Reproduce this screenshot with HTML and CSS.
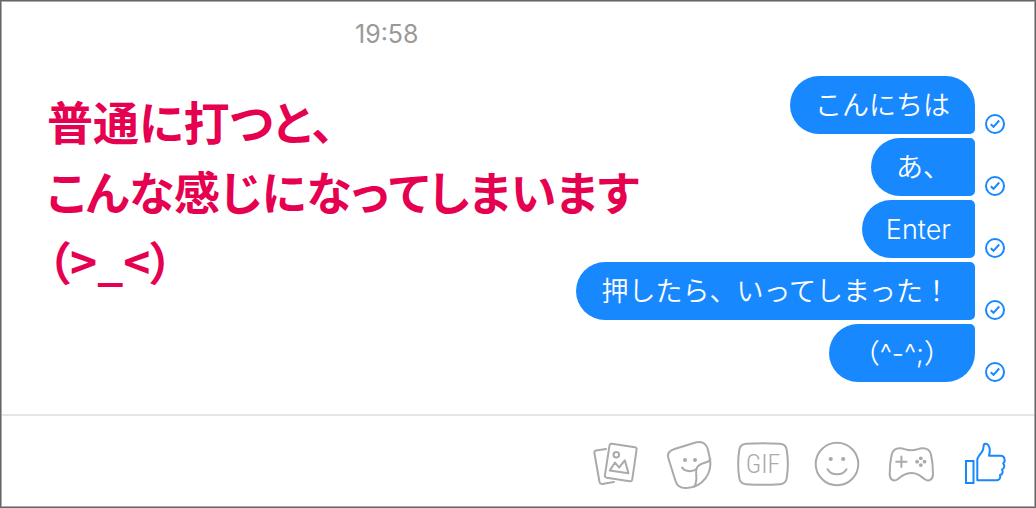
FILE: index.html
```html
<!DOCTYPE html>
<html lang="ja">
<head>
    <meta charset="UTF-8">
    <meta name="viewport" content="width=device-width, initial-scale=1.0">
    <title>Messenger</title>
    <link rel="stylesheet" href="styles.css">
</head>
<body>
    <div class="window">
        <main class="chat">
            <time class="time" datetime="19:58">19:58</time>
            <div class="content">
                <p class="note">普通に打つと、<br>こんな感じになってしまいます<br>（&gt;_&lt;）</p>
                <ul class="messages">
                    <li class="message">
                        <span class="bubble bubble-first">こんにちは</span>
                        <svg class="check" viewBox="0 0 20 20"><circle cx="10" cy="10" r="9"/><path d="M5.800 10.300L8.500 12.800L14.200 6.500"/></svg>
                    </li>
                    <li class="message">
                        <span class="bubble">あ、</span>
                        <svg class="check" viewBox="0 0 20 20"><circle cx="10" cy="10" r="9"/><path d="M5.800 10.300L8.500 12.800L14.200 6.500"/></svg>
                    </li>
                    <li class="message">
                        <span class="bubble bubble-latin">Enter</span>
                        <svg class="check" viewBox="0 0 20 20"><circle cx="10" cy="10" r="9"/><path d="M5.800 10.300L8.500 12.800L14.200 6.500"/></svg>
                    </li>
                    <li class="message">
                        <span class="bubble">押したら、いってしまった！</span>
                        <svg class="check" viewBox="0 0 20 20"><circle cx="10" cy="10" r="9"/><path d="M5.800 10.300L8.500 12.800L14.200 6.500"/></svg>
                    </li>
                    <li class="message">
                        <span class="bubble bubble-latin bubble-last">（^-^;）</span>
                        <svg class="check" viewBox="0 0 20 20"><circle cx="10" cy="10" r="9"/><path d="M5.800 10.300L8.500 12.800L14.200 6.500"/></svg>
                    </li>
                </ul>
            </div>
        </main>
        <footer class="toolbar">
            <button class="tool" type="button" aria-label="写真">
                <svg class="icon" viewBox="0 0 52 52">
                    <path d="M17 11L7 12.600Q5 13 5.400 15L10.500 44Q11 46.200 13 46L25 44"/>
                    <path d="M23 5.700L46 9.300Q48 9.700 47.600 11.700L43.200 41.600Q42.800 43.600 40.800 43.300L17.800 39.700Q15.500 39.300 15.900 37.300L20.500 7.400Q21 5.300 23 5.700Z"/>
                    <circle cx="27.300" cy="16.800" r="2.800"/>
                    <path d="M20.700 32.600L26 24.500L30 29.500L35.800 22.300L39.500 35.300Z"/>
                </svg>
            </button>
            <button class="tool" type="button" aria-label="スタンプ">
                <svg class="icon" viewBox="0 0 52 52">
                    <path d="M11.500 11L31 5C39 2.500 43.500 5.500 45 12L47 21C49.500 35 40 49 24 50C17.500 50.500 14 48 12.500 43L5.300 20C4 15.500 6.500 12.500 11.500 11Z"/>
                    <path d="M47.300 21.500C45 26 38 23.500 34 29.500C31 35 36 39 31.500 48.500"/>
                    <path d="M19 29.500C21.500 33.500 28.500 34.500 33.500 31"/>
                    <circle class="dot" cx="22" cy="22" r="2"/>
                    <circle class="dot" cx="32" cy="22" r="2"/>
                </svg>
            </button>
            <button class="tool" type="button" aria-label="GIF">
                <svg class="icon" viewBox="0 0 52 52">
                    <path d="M9 5.800Q26 4.600 43 5.800Q49 6.300 49.700 12Q52 26 49.700 40Q49 45.700 43 46.200Q26 47.400 9 46.200Q3 45.700 2.300 40Q0 26 2.300 12Q3 6.300 9 5.800Z"/>
                    <text class="gif" x="26" y="35">GIF</text>
                </svg>
            </button>
            <button class="tool" type="button" aria-label="絵文字">
                <svg class="icon" viewBox="0 0 52 52">
                    <circle cx="26" cy="26" r="21.300"/>
                    <path d="M16.500 31.300C20.500 38 31.500 38 35.500 31.300"/>
                    <circle class="dot" cx="19.700" cy="21" r="2.100"/>
                    <circle class="dot" cx="32.200" cy="21" r="2.100"/>
                </svg>
            </button>
            <button class="tool" type="button" aria-label="ゲーム">
                <svg class="icon" viewBox="0 0 52 52">
                    <path d="M15.500 10.300C19 10.500 21 12.300 26.300 12.300S33.500 10.500 37 10.300C42.500 10 45 12.500 46 16.500C47.300 22 48 29 48 36C48 42 43.500 44 39.500 41C35 37.500 32 35 26.300 35S17.500 37.500 13 41C9 44 4.700 42 4.700 36C4.700 29 5.400 22 6.700 16.500C7.700 12.500 10 10 15.500 10.300Z"/>
                    <path d="M16.400 18.500V29M11.200 23.700H21.600"/>
                    <circle class="dot" cx="35.800" cy="20.300" r="1.900"/>
                    <circle class="dot" cx="35.800" cy="27.100" r="1.900"/>
                    <circle class="dot" cx="32.100" cy="23.700" r="1.900"/>
                    <circle class="dot" cx="39.500" cy="23.700" r="1.900"/>
                </svg>
            </button>
            <button class="tool tool-like" type="button" aria-label="いいね！">
                <svg class="icon" viewBox="0 0 52 52">
                    <path class="sharp" d="M7 23H14.500V45H7Z"/>
                    <path d="M18.300 21.500V42.200H37.500C40.500 42.200 42 40 41 37C43.500 36.500 44.500 33.500 43 31.500C45.500 30.500 46 27.500 44.200 25.500C47 23 45.500 17.800 42 17.800H30C31 14 31.200 10 29.500 7.500C28 5 24.700 5 24.700 7.500C24.700 10.500 24.300 12.500 22.500 14.500C20.500 17 18.800 19 18.300 21.500Z"/>
                </svg>
            </button>
        </footer>
    </div>
</body>
</html>
```
FILE: styles.css
```css
* {
    box-sizing: border-box;
}

body {
    margin: 0;
    background-color: #fff;
    font-family: Inter, "Noto Sans CJK JP", sans-serif;
}

.window {
    display: flex;
    flex-direction: column;
    min-height: 100vh;
    border: 1px solid #666;
    box-shadow: inset 0 0 0 1px #aaa;
}

.chat {
    flex: 1;
    padding: 19px 30px 32px 46px;
}

.time {
    display: block;
    padding-left: 308px;
    color: #999;
    font-size: 25px;
    line-height: 28px;
}

.content {
    display: flex;
    justify-content: space-between;
    margin-top: 28px;
}

.note {
    margin: 9px 0 0;
    color: #e60050;
    font-family: "Noto Sans CJK JP", sans-serif;
    font-size: 46px;
    font-weight: bold;
    font-feature-settings: "palt";
    font-kerning: none;
    line-height: 70px;
    white-space: nowrap;
}

/* the long bubble may reach under the note */
.messages {
    display: flex;
    flex-direction: column;
    gap: 4px;
    width: 0;
    margin: 0;
    padding: 0;
    list-style: none;
    align-items: flex-end;
}

.message {
    display: flex;
    align-items: flex-end;
    gap: 10px;
}

.bubble {
    padding: 2px 25px 0;
    border-radius: 29px 5px 5px 29px;
    background-color: #1888ff;
    color: #fff;
    font-size: 27px;
    font-weight: 350;
    line-height: 56px;
    white-space: nowrap;
}

.bubble-latin {
    padding: 2px 24px 0;
}

.bubble-first {
    border-top-right-radius: 29px;
}

.bubble-last {
    border-bottom-right-radius: 29px;
}

.check {
    flex: none;
    width: 20px;
    height: 20px;
    fill: none;
    stroke: #1888ff;
    stroke-width: 2;
}

.toolbar {
    display: flex;
    justify-content: flex-end;
    margin: 0 1px;
    padding: 22px 12px 17px;
    border-top: 2px solid #e5e5e5;
}

.tool {
    width: 74px;
    padding: 0;
    border: none;
    background: none;
    color: #aaa;
    cursor: pointer;
}

.tool-like {
    color: #1888ff;
}

.icon {
    display: block;
    width: 52px;
    height: 52px;
    margin: 0 auto;
    fill: none;
    stroke: currentColor;
    stroke-width: 2;
    stroke-linecap: round;
    stroke-linejoin: round;
}

.dot {
    fill: currentColor;
    stroke: none;
}

.sharp {
    stroke-linejoin: miter;
}

.gif {
    fill: currentColor;
    stroke: none;
    font-family: "Roboto Condensed", Roboto, sans-serif;
    font-size: 26px;
    font-weight: 300;
    text-anchor: middle;
}
```
